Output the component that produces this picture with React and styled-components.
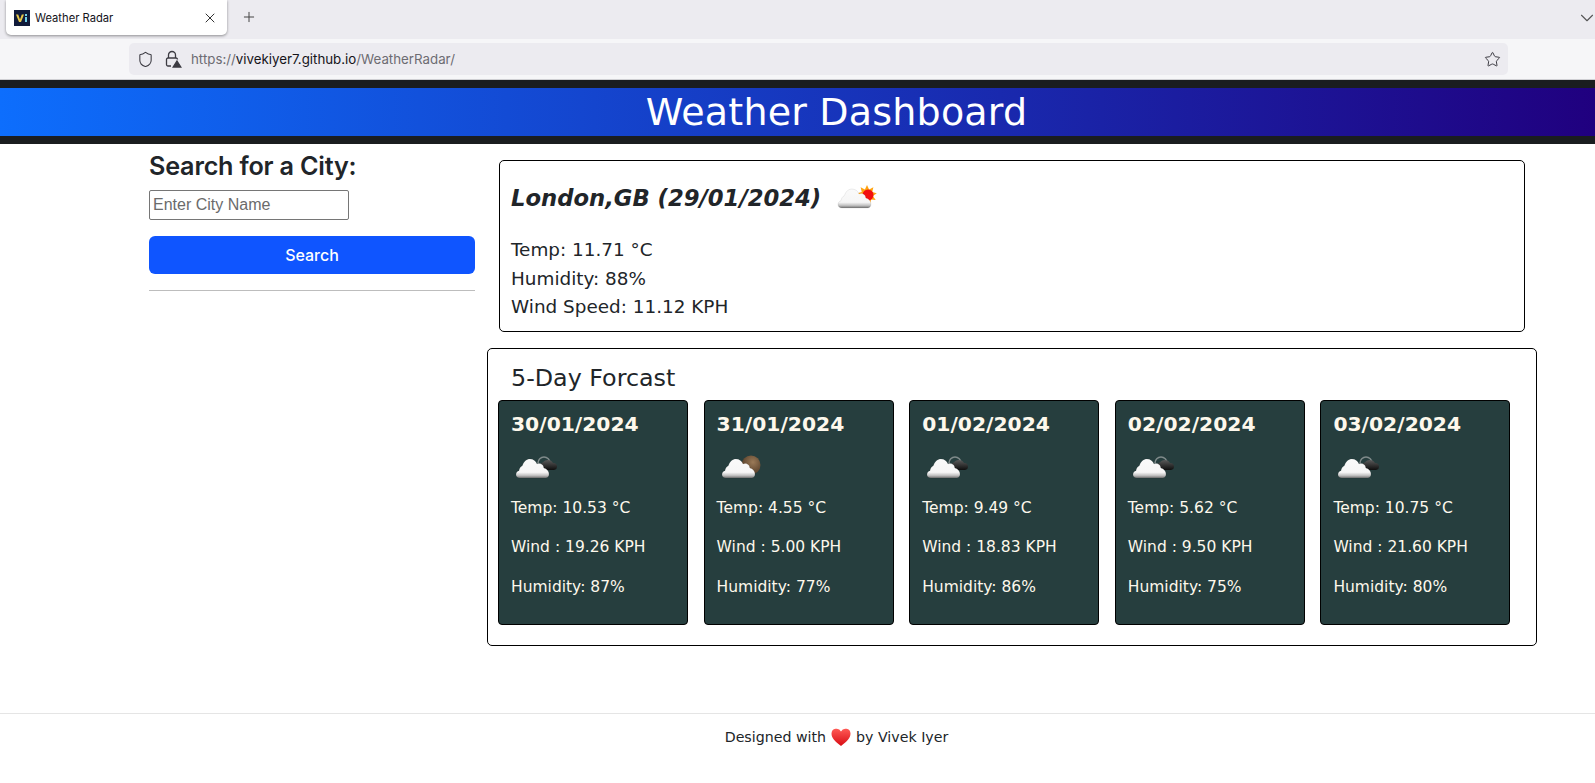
import React from "react";
import styled, { createGlobalStyle } from "styled-components";
import { Shield, Star, X, Plus, ChevronDown } from "lucide-react";

const Global = createGlobalStyle`
  html, body { margin: 0; padding: 0; background: #fff; }
  body { font-family: "DejaVu Sans", sans-serif; color: #212529; overflow: hidden; }
  * { box-sizing: border-box; }
`;
const Page = styled.div`width: 1595px; height: 783px; display: flex; flex-direction: column; overflow: hidden;`;
const TabStrip = styled.div`height: 39px; background: #ecebf0; display: flex; align-items: flex-start; padding-left: 6px; position: relative;`;
const Tab = styled.div`width: 221px; height: 35px; background: #fff; border-radius: 0 0 5px 5px; box-shadow: 0 1px 3px rgba(0,0,0,.4); display: flex; align-items: center; padding: 0 9px 0 8px;`;
const Favicon = styled.svg`width: 16px; height: 16px; flex: none; margin-right: 5px;`;
const TabTitle = styled.span`flex: 1; font: 400 11.2px Inter, sans-serif; color: #15141a;`;
const NewTab = styled.div`margin: 9px 0 0 14px; display: flex; color: #444;`;
const TabsMenu = styled.div`position: absolute; right: -3px; top: 7px; color: #555; display: flex;`;
const Toolbar = styled.div`height: 41px; background: #f6f6f8; border-bottom: 1px solid #cfcfd3; padding: 4px 87px 4px 129px; display: flex;`;
const UrlBar = styled.div`flex: 1; height: 32px; border-radius: 5px; background: #ecebf0; display: flex; align-items: center; padding: 0 7px 0 8px;`;
const UrlIcons = styled.div`display: flex; align-items: center; gap: 11px; color: #3c3b42; width: 54px;`;
const UrlText = styled.div`flex: 1; font: 400 13.3px Inter, sans-serif; color: #6d6c72;`;
const UrlHost = styled.span`color: #15141a;`;
const Header = styled.header`height: 64px; flex: none; border-top: 8px solid #1a1d20; border-bottom: 8px solid #1a1d20; background: linear-gradient(to right, #0d6efd, #20007f); color: #fff; display: flex; align-items: center; justify-content: center; padding-left: 78px;`;
const HeaderTitle = styled.h1`margin: 0; font: 400 38px/48px "DejaVu Sans", sans-serif; letter-spacing: .2px;`;
const Main = styled.main`flex: 1; display: flex; padding: 0 0 0 149px;`;
const Sidebar = styled.aside`width: 326px; flex: none; padding-top: 7px;`;
const SearchTitle = styled.h2`margin: 0 0 8px; font: 600 25.2px/31px Inter, sans-serif; color: #212529; letter-spacing: -.2px;`;
const CityInput = styled.input`display: block; width: 200px; height: 30px; border: 1px solid #767676; border-radius: 2px; padding: 0 3px; font: 400 16px "Liberation Sans", sans-serif; &::placeholder { color: #6b6b6b; opacity: 1; }`;
const SearchButton = styled.button`display: block; width: 100%; height: 38px; margin-top: 16px; border: 0; border-radius: 6px; background: #0f55ff; color: #fff; font: 500 16px Inter, sans-serif;`;
const Rule = styled.hr`margin: 16px 0 0; border: 0; border-top: 1px solid #bdbdbd;`;
const Content = styled.section`width: 1050px; margin-left: 12px; padding-top: 16px;`;
const CurrentCard = styled.div`width: 1026px; height: 172px; margin-left: 12px; border: 1px solid #000; border-radius: 5px; padding: 19px 11px 0;`;
const CityTitle = styled.h2`margin: 0 0 20px; display: flex; align-items: center; font: italic 700 22.7px/36px "DejaVu Sans", sans-serif; color: #212529;`;
const CityIcon = styled.span`display: flex; margin: -5px 0 0 16px;`;
const Stat = styled.div`font-size: 18.4px; line-height: 28.5px; color: #212529;`;
const ForecastPanel = styled.div`height: 298px; margin-top: 16px; border: 1px solid #000; border-radius: 5px; padding: 13px 10px 0;`;
const ForecastTitle = styled.h3`margin: 0 0 5px 13px; font: 400 23.8px/33px "DejaVu Sans", sans-serif; color: #212529;`;
const Cards = styled.div`display: flex; gap: 15.6px;`;
const DayCard = styled.article`width: 190px; height: 225px; background: #263e3e; border: 1px solid #000; border-radius: 4px; color: #fdf8ec; padding: 10px 12px 0;`;
const DayDate = styled.h4`margin: 0 0 8px; font: 700 20.3px/27px "DejaVu Sans", sans-serif;`;
const DayIcon = styled.div`height: 47px; margin: 0 0 5px 4px; padding-top: 5px; display: flex; align-items: flex-start;`;
const DayStat = styled.p`margin: 0 0 18.3px; font-size: 15.5px; line-height: 21px; white-space: nowrap;`;
const Footer = styled.footer`height: 70px; flex: none; border-top: 1px solid #e5e5e5; display: flex; align-items: flex-start; justify-content: center; padding: 11px 0 0 78px; font-size: 14.2px; line-height: 24px; color: #212529;`;
const Heart = styled.svg`width: 20px; height: 20px; margin: 2px 5px 0;`;

const LockWarn = () => (
  <svg width="17" height="18" viewBox="0 0 17 18" fill="none" stroke="#3c3b42" strokeWidth="1.3">
    <path d="M3.500 8V5a3.500 3.500 0 0 1 7 0v3" />
    <path d="M6 16H3a1.500 1.500 0 0 1-1.500-1.500V9.500A1.500 1.500 0 0 1 3 8h8a1.500 1.500 0 0 1 1.500 1.500" />
    <path d="M12 11l3.800 6H8.200z" fill="#3c3b42" />
  </svg>
);

const rays = (cx, cy, outer, inner, n) =>
  Array.from({ length: n * 2 }, (_, i) => {
    const a = (Math.PI * i) / n;
    const r = i % 2 ? inner : outer;
    return `${(cx + r * Math.sin(a)).toFixed(1)},${(cy - r * Math.cos(a)).toFixed(1)}`;
  }).join(" ");

const Accent = ({ kind }) => {
  if (kind === "sun") return (
    <g>
      <polygon points={rays(30, 14, 10, 6, 9)} fill="#ffa310" />
      <circle cx="31" cy="14" r="5.500" fill="#f21010" />
    </g>
  );
  if (kind === "moon") return <circle cx="30" cy="14" r="9.500" fill="url(#moonFill)" />;
  return (
    <g>
      <circle cx="29" cy="12" r="6" fill="none" stroke="#7f8a8a" strokeWidth="1.500" />
      <path d="M29 19a4 4 0 0 1-1-7.800 6 6 0 0 1 10 .8 3.500 3.500 0 0 1 4 3.500 3.500 3.500 0 0 1-3 3.500z" fill="url(#darkFill)" />
    </g>
  );
};

const WeatherIcon = ({ kind }) => (
  <svg width="46" height="29" viewBox="0 0 46 29">
    <defs>
      <linearGradient id="cloudFill" x1="0" y1="0" x2="0" y2="1">
        <stop offset="0" stopColor="#fafafa" />
        <stop offset=".7" stopColor="#f6f6f6" />
        <stop offset=".86" stopColor="#c4c4c4" />
        <stop offset="1" stopColor="#737373" />
      </linearGradient>
      <linearGradient id="darkFill" x1="0" y1="0" x2="0" y2="1">
        <stop offset="0" stopColor="#5a5a5a" />
        <stop offset="1" stopColor="#0e0e0e" />
      </linearGradient>
      <radialGradient id="moonFill" cx=".6" cy=".35" r=".75">
        <stop offset="0" stopColor="#9a7a58" />
        <stop offset="1" stopColor="#4a3320" />
      </radialGradient>
    </defs>
    <Accent kind={kind} />
    <path d="M5 27C2.500 27 1 25.500 1 23.500c0-2 1.300-3.200 3-3.800.3-2.600 1.800-4.300 3.500-5.300C8.800 10.500 11.500 8 15 8c3.300 0 6 2 7 5 1.200-.6 2.800-.7 4.200 0 1.600.8 2.500 2.200 2.600 3.900C31.800 17.700 34 20 34 23c0 2.500-1.500 4-3.500 4z" fill="url(#cloudFill)" stroke="rgba(0,0,0,.14)" strokeWidth=".5" />
  </svg>
);

const days = [
  ["30/01/2024", "dark", "10.53", "19.26", "87"],
  ["31/01/2024", "moon", "4.55", "5.00", "77"],
  ["01/02/2024", "dark", "9.49", "18.83", "86"],
  ["02/02/2024", "dark", "5.62", "9.50", "75"],
  ["03/02/2024", "dark", "10.75", "21.60", "80"],
];

export default function App() {
  return (
    <Page>
      <Global />
      <TabStrip>
        <Tab>
          <Favicon viewBox="0 0 16 16">
            <rect width="16" height="16" fill="#101a3a" />
            <path d="M2 4.500h2.200L6 9.500l1.800-5H10L7 12H5z" fill="#e8c84a" />
            <path d="M11 7h2v5h-2zM11 4h2v2h-2z" fill="#6fd0e8" />
          </Favicon>
          <TabTitle>Weather Radar</TabTitle>
          <X size={16} strokeWidth={1.4} color="#222" />
        </Tab>
        <NewTab><Plus size={16} strokeWidth={1.5} /></NewTab>
        <TabsMenu><ChevronDown size={22} strokeWidth={1.2} /></TabsMenu>
      </TabStrip>
      <Toolbar>
        <UrlBar>
          <UrlIcons>
            <Shield size={17} strokeWidth={1.5} />
            <LockWarn />
          </UrlIcons>
          <UrlText>https://<UrlHost>vivekiyer7.github.io</UrlHost>/WeatherRadar/</UrlText>
          <Star size={17} strokeWidth={1.4} color="#3c3b42" />
        </UrlBar>
      </Toolbar>
      <Header><HeaderTitle>Weather Dashboard</HeaderTitle></Header>
      <Main>
        <Sidebar>
          <SearchTitle>Search for a City:</SearchTitle>
          <CityInput placeholder="Enter City Name" />
          <SearchButton>Search</SearchButton>
          <Rule />
        </Sidebar>
        <Content>
          <CurrentCard>
            <CityTitle>London,GB (29/01/2024)<CityIcon><WeatherIcon kind="sun" /></CityIcon></CityTitle>
            <Stat>Temp: 11.71 °C</Stat>
            <Stat>Humidity: 88%</Stat>
            <Stat>Wind Speed: 11.12 KPH</Stat>
          </CurrentCard>
          <ForecastPanel>
            <ForecastTitle>5-Day Forcast</ForecastTitle>
            <Cards>
              {days.map(([date, kind, temp, wind, hum]) => (
                <DayCard key={date}>
                  <DayDate>{date}</DayDate>
                  <DayIcon><WeatherIcon kind={kind} /></DayIcon>
                  <DayStat>Temp: {temp} °C</DayStat>
                  <DayStat>Wind : {wind} KPH</DayStat>
                  <DayStat>Humidity: {hum}%</DayStat>
                </DayCard>
              ))}
            </Cards>
          </ForecastPanel>
        </Content>
      </Main>
      <Footer>
        Designed with
        <Heart viewBox="0 0 20 20"><defs><linearGradient id="heartFill" x1="0" y1="0" x2="0" y2="1"><stop offset="0" stopColor="#ff5a55" /><stop offset="1" stopColor="#d80c14" /></linearGradient></defs><path d="M10 19C4 14.500.5 11 .5 6.500A5 5 0 0 1 10 4.500a5 5 0 0 1 9.500 2C19.500 11 16 14.500 10 19z" fill="url(#heartFill)" /></Heart>
        by Vivek Iyer
      </Footer>
    </Page>
  );
}
